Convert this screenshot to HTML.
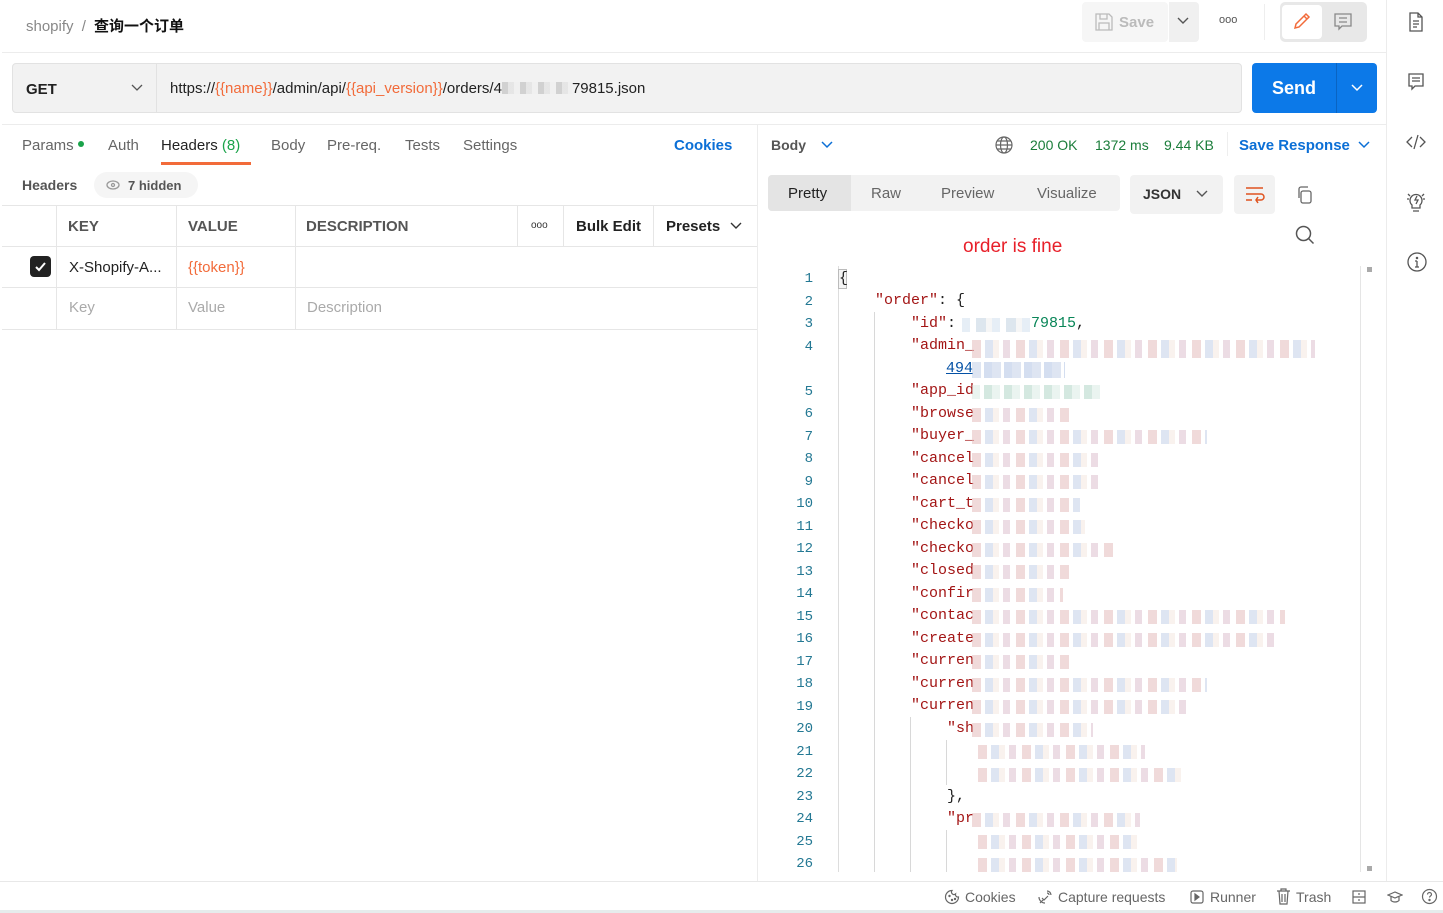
<!DOCTYPE html>
<html><head><meta charset="utf-8"><style>
*{box-sizing:border-box;margin:0;padding:0}
body{width:1443px;height:913px;overflow:hidden;background:#fff;font-family:"Liberation Sans","Noto Sans CJK SC",sans-serif;font-size:14px;color:#212121;position:relative}
.a{position:absolute;white-space:nowrap}
.t{margin-top:1px}
.hl{position:absolute;background:#e6e6e6}
.mono{font-family:"Liberation Mono",monospace;font-size:15px;margin-top:2px}
.k{color:#a31515}
.ln{position:absolute;width:40px;text-align:right;left:773px;color:#237893;font-family:"Liberation Mono",monospace;font-size:14px;margin-top:1px}
.bl{position:absolute;height:14px;opacity:.5;background:repeating-linear-gradient(90deg,#e2b5b5 0 9px,#fff 9px 13px,#bccbe6 13px 21px,#f3e6dc 21px 27px,#fff 27px 31px,#d8b8c8 31px 38px,#fff 38px 44px)}
.vg{position:absolute;width:1px;background:#d8d8d8}
.org{color:#f26b3a}
</style></head><body>
<div class="a" style="left:26px;top:15px;font-size:15px;color:#888">shopify <span style="margin:0 4px">/</span> <span style="color:#111;font-weight:bold">查询一个订单</span></div>
<div class="a" style="left:1082px;top:2px;width:86px;height:40px;background:#f6f6f6;border-radius:4px"></div>
<svg class="a" style="left:1094px;top:12px" width="20" height="20" viewBox="0 0 20 20" fill="none" stroke="#bbb" stroke-width="1.3"><path d="M2 2h13l3 3v13H2z M6 2v5h7V2 M5 18v-7h10v7"/></svg>
<div class="a" style="left:1119px;top:14px;font-size:15px;color:#bbb;font-weight:bold">Save</div>
<div class="a" style="left:1169px;top:2px;width:30px;height:40px;background:#f0f0f0;border-radius:0 4px 4px 0"></div>
<svg class="a" style="left:1176px;top:16px" width="14" height="10" viewBox="0 0 14 10" fill="none" stroke="#555" stroke-width="1.4"><path d="M2 2l5 5 5-5"/></svg>
<div class="a" style="left:1219px;top:14px;font-size:11px;color:#555;letter-spacing:0px">ooo</div>
<div class="a" style="left:1264px;top:4px;width:1px;height:36px;background:#eee"></div>
<div class="a" style="left:1280px;top:2px;width:87px;height:40px;background:#e8e8e8;border-radius:5px"></div>
<div class="a" style="left:1282px;top:5px;width:40px;height:34px;background:#fff;border-radius:4px"></div>
<svg class="a" style="left:1292px;top:11px" width="20" height="20" viewBox="0 0 20 20" fill="none" stroke="#f26b3a" stroke-width="1.5"><path d="M3 17l1-4L14 3l3 3L7 16z M12 5l3 3"/></svg>
<svg class="a" style="left:1333px;top:12px" width="20" height="20" viewBox="0 0 20 20" fill="none" stroke="#888" stroke-width="1.3"><path d="M2 2h16v12H9l-3 3v-3H2z M6 6h8 M6 10h8"/></svg>
<div class="hl" style="left:2px;top:52px;width:1384px;height:1px;background:#ececec"></div>
<div class="a" style="left:12px;top:63px;width:1230px;height:50px;background:#f2f2f2;border:1px solid #e2e2e2;border-radius:4px"></div>
<div class="a" style="left:156px;top:64px;width:1px;height:48px;background:#e2e2e2"></div>
<div class="a" style="left:26px;top:81px;font-size:15px;font-weight:bold">GET</div>
<svg class="a" style="left:130px;top:83px" width="14" height="10" viewBox="0 0 14 10" fill="none" stroke="#555" stroke-width="1.3"><path d="M2 2l5 5 5-5"/></svg>
<div class="a" style="left:170px;top:80px;font-size:15px;color:#222">https://<span class="org">{{name}}</span>/admin/api/<span class="org">{{api_version}}</span>/orders/4<span style="display:inline-block;width:70px;height:12px;background:repeating-linear-gradient(90deg,#bbb 0 6px,#ddd 6px 12px,#eee 12px 18px);opacity:.6;vertical-align:-1px"></span>79815.json</div>
<div class="a" style="left:1252px;top:63px;width:125px;height:50px;background:#0c79e8;border-radius:4px"></div>
<div class="a" style="left:1336px;top:63px;width:1px;height:50px;background:#0a64c2"></div>
<div class="a" style="left:1272px;top:78px;font-size:18px;color:#fff;font-weight:bold">Send</div>
<svg class="a" style="left:1350px;top:83px" width="14" height="10" viewBox="0 0 14 10" fill="none" stroke="#fff" stroke-width="1.5"><path d="M2 2l5 5 5-5"/></svg>
<div class="hl" style="left:2px;top:124px;width:1384px;height:1px;background:#ececec"></div>
<div class="a" style="left:22px;top:137px;font-size:15px;color:#666">Params <span style="display:inline-block;width:6px;height:6px;border-radius:3px;background:#1aa34a;vertical-align:3px"></span></div>
<div class="a" style="left:108px;top:137px;font-size:15px;color:#666">Auth</div>
<div class="a" style="left:161px;top:137px;font-size:15px;color:#222">Headers <span style="color:#1aa34a">(8)</span></div>
<div class="a" style="left:161px;top:162px;width:90px;height:3px;background:#f26b3a"></div>
<div class="a" style="left:271px;top:137px;font-size:15px;color:#666">Body</div>
<div class="a" style="left:327px;top:137px;font-size:15px;color:#666">Pre-req.</div>
<div class="a" style="left:405px;top:137px;font-size:15px;color:#666">Tests</div>
<div class="a" style="left:463px;top:137px;font-size:15px;color:#666">Settings</div>
<div class="a" style="left:674px;top:137px;font-size:15px;color:#0b6fd6;font-weight:bold">Cookies</div>
<div class="a" style="left:22px;top:177px;font-size:14px;color:#555;font-weight:bold">Headers</div>
<div class="a" style="left:94px;top:172px;width:104px;height:26px;background:#f5f5f5;border-radius:13px"></div>
<svg class="a" style="left:106px;top:179px" width="14" height="12" viewBox="0 0 14 12" fill="none" stroke="#999" stroke-width="1.3"><ellipse cx="7" cy="6" rx="6" ry="4"/><circle cx="7" cy="6" r="1.5"/></svg>
<div class="a" style="left:128px;top:178px;font-size:13px;color:#555;font-weight:bold">7 hidden</div>
<div class="hl" style="left:2px;top:205px;width:755px;height:1px"></div>
<div class="hl" style="left:2px;top:246px;width:755px;height:1px"></div>
<div class="hl" style="left:2px;top:287px;width:755px;height:1px"></div>
<div class="hl" style="left:2px;top:329px;width:755px;height:1px"></div>
<div class="hl" style="left:56px;top:205px;width:1px;height:124px"></div>
<div class="hl" style="left:176px;top:205px;width:1px;height:124px"></div>
<div class="hl" style="left:295px;top:205px;width:1px;height:124px"></div>
<div class="hl" style="left:517px;top:205px;width:1px;height:41px"></div>
<div class="hl" style="left:563px;top:205px;width:1px;height:41px"></div>
<div class="hl" style="left:653px;top:205px;width:1px;height:41px"></div>
<div class="a" style="left:68px;top:218px;font-size:15px;color:#555;font-weight:bold">KEY</div>
<div class="a" style="left:188px;top:218px;font-size:15px;color:#555;font-weight:bold">VALUE</div>
<div class="a" style="left:306px;top:218px;font-size:15px;color:#555;font-weight:bold">DESCRIPTION</div>
<div class="a" style="left:531px;top:220px;font-size:10px;color:#333">ooo</div>
<div class="a" style="left:576px;top:218px;font-size:15px;color:#222;font-weight:bold">Bulk Edit</div>
<div class="a" style="left:666px;top:218px;font-size:15px;color:#222;font-weight:bold">Presets</div>
<svg class="a" style="left:729px;top:221px" width="14" height="10" viewBox="0 0 14 10" fill="none" stroke="#333" stroke-width="1.4"><path d="M2 2l5 5 5-5"/></svg>
<div class="a" style="left:30px;top:256px;width:21px;height:21px;background:#222;border-radius:4px"></div>
<svg class="a" style="left:33px;top:259px" width="15" height="15" viewBox="0 0 15 15" fill="none" stroke="#fff" stroke-width="2"><path d="M3 8l3 3 6-7"/></svg>
<div class="a" style="left:69px;top:259px;font-size:15px;color:#222">X-Shopify-A...</div>
<div class="a" style="left:188px;top:259px;font-size:15px"><span class="org">{{token}}</span></div>
<div class="a" style="left:69px;top:299px;font-size:15px;color:#aaa">Key</div>
<div class="a" style="left:188px;top:299px;font-size:15px;color:#aaa">Value</div>
<div class="a" style="left:307px;top:299px;font-size:15px;color:#aaa">Description</div>
<div class="a" style="left:757px;top:125px;width:1px;height:756px;background:#ececec"></div>
<div class="a" style="left:771px;top:137px;font-size:14px;color:#555;font-weight:bold">Body</div>
<svg class="a" style="left:820px;top:140px" width="14" height="10" viewBox="0 0 14 10" fill="none" stroke="#0b6fd6" stroke-width="1.5"><path d="M2 2l5 5 5-5"/></svg>
<svg class="a" style="left:994px;top:135px" width="20" height="20" viewBox="0 0 20 20" fill="none" stroke="#666" stroke-width="1.2"><circle cx="10" cy="10" r="8"/><ellipse cx="10" cy="10" rx="3.5" ry="8"/><path d="M2 10h16 M3.5 6h13 M3.5 14h13"/></svg>
<div class="a" style="left:1030px;top:137px;font-size:14px;color:#1a7d3a">200 OK</div>
<div class="a" style="left:1095px;top:137px;font-size:14px;color:#1a7d3a">1372 ms</div>
<div class="a" style="left:1164px;top:137px;font-size:14px;color:#1a7d3a">9.44 KB</div>
<div class="a" style="left:1227px;top:132px;width:1px;height:24px;background:#eee"></div>
<div class="a" style="left:1239px;top:137px;font-size:15px;color:#0b6fd6;font-weight:bold">Save Response</div>
<svg class="a" style="left:1357px;top:140px" width="14" height="10" viewBox="0 0 14 10" fill="none" stroke="#0b6fd6" stroke-width="1.5"><path d="M2 2l5 5 5-5"/></svg>
<div class="a" style="left:768px;top:175px;width:352px;height:36px;background:#f2f2f2;border-radius:4px"></div>
<div class="a" style="left:768px;top:175px;width:83px;height:36px;background:#e4e4e4;border-radius:4px 0 0 4px"></div>
<div class="a" style="left:788px;top:185px;font-size:15px;color:#222">Pretty</div>
<div class="a" style="left:871px;top:185px;font-size:15px;color:#666">Raw</div>
<div class="a" style="left:941px;top:185px;font-size:15px;color:#666">Preview</div>
<div class="a" style="left:1037px;top:185px;font-size:15px;color:#666">Visualize</div>
<div class="a" style="left:1130px;top:175px;width:93px;height:39px;background:#f2f2f2;border-radius:4px"></div>
<div class="a" style="left:1143px;top:186px;font-size:14px;color:#333;font-weight:bold">JSON</div>
<svg class="a" style="left:1195px;top:189px" width="14" height="10" viewBox="0 0 14 10" fill="none" stroke="#555" stroke-width="1.4"><path d="M2 2l5 5 5-5"/></svg>
<div class="a" style="left:1234px;top:175px;width:41px;height:39px;background:#f2f2f2;border-radius:4px"></div>
<svg class="a" style="left:1244px;top:185px" width="22" height="20" viewBox="0 0 22 20" fill="none" stroke="#e0531f" stroke-width="1.5"><path d="M2 3h17 M2 9h15a3 3 0 010 6h-5 M14 12l-2 3 2 3 M2 15h6"/></svg>
<svg class="a" style="left:1295px;top:185px" width="20" height="20" viewBox="0 0 20 20" fill="none" stroke="#666" stroke-width="1.3"><rect x="6" y="6" width="10" height="12" rx="2"/><path d="M4 13V4a2 2 0 012-2h7"/></svg>
<svg class="a" style="left:1294px;top:224px" width="22" height="22" viewBox="0 0 22 22" fill="none" stroke="#555" stroke-width="1.5"><circle cx="9.5" cy="9.5" r="7"/><path d="M14.5 14.5l5 5"/></svg>
<div class="a" style="left:963px;top:236px;font-size:19px;color:#e8202a">order is fine</div>
<div class="a" style="left:838px;top:266px;width:1px;height:606px;background:#ddd"></div>
<div class="a" style="left:1360px;top:266px;width:1px;height:606px;background:#e5e5e5"></div>
<div class="a" style="left:1367px;top:267px;width:5px;height:5px;background:#aaa"></div>
<div class="a" style="left:1367px;top:866px;width:5px;height:5px;background:#aaa"></div>
<div class="vg" style="left:874px;top:312px;height:560px"></div>
<div class="vg" style="left:910px;top:717px;height:155px"></div>
<div class="vg" style="left:946px;top:740px;height:45px"></div>
<div class="vg" style="left:946px;top:830px;height:42px"></div>
<div class="a" style="left:838px;top:269px;width:9px;height:20px;border:1px solid #bbb;background:#f4f4f4"></div>
<div class="mono a" style="left:839px;top:268px">{</div>
<div class="mono a" style="left:875px;top:290px"><span class="k">"order"</span>: {</div>
<div class="mono a" style="left:911px;top:313px"><span class="k">"id"</span>: <span style="display:inline-block;width:66px"></span><span style="color:#098658">79815</span>,</div>
<div class="mono a" style="left:911px;top:335px"><span class="k">"admin_</span></div>
<div class="mono a" style="left:946px;top:358px;color:#0451a5;text-decoration:underline">494</div>
<div class="mono a" style="left:911px;top:380px"><span class="k">"app_id</span></div>
<div class="mono a" style="left:911px;top:403px"><span class="k">"browse</span></div>
<div class="mono a" style="left:911px;top:425px"><span class="k">"buyer_</span></div>
<div class="mono a" style="left:911px;top:448px"><span class="k">"cancel</span></div>
<div class="mono a" style="left:911px;top:470px"><span class="k">"cancel</span></div>
<div class="mono a" style="left:911px;top:493px"><span class="k">"cart_t</span></div>
<div class="mono a" style="left:911px;top:515px"><span class="k">"checko</span></div>
<div class="mono a" style="left:911px;top:538px"><span class="k">"checko</span></div>
<div class="mono a" style="left:911px;top:560px"><span class="k">"closed</span></div>
<div class="mono a" style="left:911px;top:583px"><span class="k">"confir</span></div>
<div class="mono a" style="left:911px;top:605px"><span class="k">"contac</span></div>
<div class="mono a" style="left:911px;top:628px"><span class="k">"create</span></div>
<div class="mono a" style="left:911px;top:650px"><span class="k">"curren</span></div>
<div class="mono a" style="left:911px;top:673px"><span class="k">"curren</span></div>
<div class="mono a" style="left:911px;top:695px"><span class="k">"curren</span></div>
<div class="mono a" style="left:947px;top:718px"><span class="k">"sh</span></div>
<div class="mono a" style="left:947px;top:786px">},</div>
<div class="mono a" style="left:947px;top:808px"><span class="k">"pr</span></div>
<div class="bl" style="left:962px;top:318px;width:72px;background:repeating-linear-gradient(90deg,#cde 0 8px,#fff 8px 14px,#bcd 14px 24px,#eee 24px 30px)"></div>
<div class="bl" style="left:972px;top:340px;width:343px;height:18px"></div>
<div class="bl" style="left:972px;top:362px;width:93px;height:16px;background:repeating-linear-gradient(90deg,#bccbe6 0 9px,#fff 9px 12px,#aabce0 12px 20px)"></div>
<div class="bl" style="left:972px;top:385px;width:128px;background:repeating-linear-gradient(90deg,#d6e8e0 0 8px,#fff 8px 12px,#a8d0c0 12px 20px)"></div>
<div class="bl" style="left:972px;top:408px;width:98px"></div>
<div class="bl" style="left:972px;top:430px;width:235px"></div>
<div class="bl" style="left:972px;top:453px;width:128px"></div>
<div class="bl" style="left:972px;top:475px;width:128px"></div>
<div class="bl" style="left:972px;top:498px;width:108px"></div>
<div class="bl" style="left:972px;top:520px;width:113px"></div>
<div class="bl" style="left:972px;top:543px;width:145px"></div>
<div class="bl" style="left:972px;top:565px;width:98px"></div>
<div class="bl" style="left:972px;top:588px;width:91px"></div>
<div class="bl" style="left:972px;top:610px;width:313px"></div>
<div class="bl" style="left:972px;top:633px;width:308px"></div>
<div class="bl" style="left:972px;top:655px;width:98px"></div>
<div class="bl" style="left:972px;top:678px;width:235px"></div>
<div class="bl" style="left:972px;top:700px;width:218px"></div>
<div class="bl" style="left:972px;top:723px;width:121px"></div>
<div class="bl" style="left:978px;top:745px;width:167px"></div>
<div class="bl" style="left:978px;top:768px;width:207px"></div>
<div class="bl" style="left:972px;top:813px;width:168px"></div>
<div class="bl" style="left:978px;top:835px;width:162px"></div>
<div class="bl" style="left:978px;top:858px;width:199px"></div>
<div class="ln" style="top:270px">1</div><div class="ln" style="top:293px">2</div><div class="ln" style="top:315px">3</div><div class="ln" style="top:338px">4</div>
<div class="ln" style="top:383px">5</div><div class="ln" style="top:405px">6</div><div class="ln" style="top:428px">7</div><div class="ln" style="top:450px">8</div>
<div class="ln" style="top:473px">9</div><div class="ln" style="top:495px">10</div><div class="ln" style="top:518px">11</div><div class="ln" style="top:540px">12</div>
<div class="ln" style="top:563px">13</div><div class="ln" style="top:585px">14</div><div class="ln" style="top:608px">15</div><div class="ln" style="top:630px">16</div>
<div class="ln" style="top:653px">17</div><div class="ln" style="top:675px">18</div><div class="ln" style="top:698px">19</div><div class="ln" style="top:720px">20</div>
<div class="ln" style="top:743px">21</div><div class="ln" style="top:765px">22</div><div class="ln" style="top:788px">23</div><div class="ln" style="top:810px">24</div>
<div class="ln" style="top:833px">25</div><div class="ln" style="top:855px">26</div>
<div class="a" style="left:1386px;top:0;width:1px;height:881px;background:#ececec"></div>
<svg class="a" style="left:1406px;top:11px" width="20" height="22" viewBox="0 0 20 22" fill="none" stroke="#555" stroke-width="1.3"><path d="M4 2h8l4 4v14H4z M12 2v4h4 M7 10h6 M7 13h6 M7 16h4"/></svg>
<svg class="a" style="left:1406px;top:71px" width="20" height="22" viewBox="0 0 20 22" fill="none" stroke="#555" stroke-width="1.3"><path d="M3 3h14v12H9l-3 3v-3H3z M6 7h8 M6 10h8"/></svg>
<svg class="a" style="left:1405px;top:132px" width="22" height="20" viewBox="0 0 22 20" fill="none" stroke="#555" stroke-width="1.3"><path d="M7 5l-5 5 5 5 M15 5l5 5-5 5 M13 3l-4 14"/></svg>
<svg class="a" style="left:1405px;top:190px" width="22" height="24" viewBox="0 0 22 24" fill="none" stroke="#555" stroke-width="1.3"><path d="M7 15a6 6 0 118 0v3H7z M8 21h6 M12 6l-2 4h3l-2 4 M2 9h2 M18 9h2 M3 4l2 2 M19 4l-2 2"/></svg>
<svg class="a" style="left:1406px;top:251px" width="22" height="22" viewBox="0 0 22 22" fill="none" stroke="#555" stroke-width="1.3"><circle cx="11" cy="11" r="9"/><path d="M11 10v6 M9 16h4 M9 10h2"/><circle cx="11" cy="7" r=".6" fill="#555"/></svg>
<div class="a" style="left:0;top:881px;width:1443px;height:1px;background:#e8e8e8"></div>
<div class="a" style="left:0;top:910px;width:1443px;height:3px;background:#e6ecec"></div>
<svg class="a" style="left:944px;top:889px" width="16" height="16" viewBox="0 0 16 16" fill="none" stroke="#666" stroke-width="1.2"><path d="M8 1.5a6.5 6.5 0 106.5 6.5 2.5 2.5 0 01-3-3 2.5 2.5 0 01-3.5-3.5z"/><circle cx="5.5" cy="7" r=".6"/><circle cx="8" cy="11" r=".6"/><circle cx="11" cy="10" r=".6"/></svg>
<div class="a" style="left:965px;top:889px;font-size:14px;color:#666">Cookies</div>
<svg class="a" style="left:1037px;top:889px" width="16" height="16" viewBox="0 0 16 16" fill="none" stroke="#666" stroke-width="1.2"><path d="M3 14l3-3 M2 8a6 6 0 006 6 M5 9l2 2 4-4 M10 2a4 4 0 014 4 M10 4a2 2 0 012 2"/></svg>
<div class="a" style="left:1058px;top:889px;font-size:14px;color:#666">Capture requests</div>
<svg class="a" style="left:1190px;top:890px" width="14" height="14" viewBox="0 0 14 14" fill="none" stroke="#666" stroke-width="1.2"><rect x="1" y="1" width="12" height="12" rx="2"/><path d="M5 4l4 3-4 3z" fill="#666"/></svg>
<div class="a" style="left:1210px;top:889px;font-size:14px;color:#666">Runner</div>
<svg class="a" style="left:1276px;top:888px" width="15" height="17" viewBox="0 0 15 17" fill="none" stroke="#666" stroke-width="1.2"><path d="M1 3h13 M5 3V1h5v2 M3 3l1 13h7l1-13 M6 6v8 M9 6v8"/></svg>
<div class="a" style="left:1296px;top:889px;font-size:14px;color:#666">Trash</div>
<svg class="a" style="left:1352px;top:890px" width="14" height="14" viewBox="0 0 14 14" fill="none" stroke="#666" stroke-width="1.2"><rect x="1" y="1" width="12" height="12"/><path d="M1 7h12 M7 3v2 M7 9v2"/></svg>
<svg class="a" style="left:1387px;top:890px" width="16" height="14" viewBox="0 0 16 14" fill="none" stroke="#666" stroke-width="1.2"><path d="M1 5l7-3 7 3-7 3z M4 6.5v4c2 2 6 2 8 0v-4"/></svg>
<svg class="a" style="left:1421px;top:888px" width="17" height="17" viewBox="0 0 17 17" fill="none" stroke="#666" stroke-width="1.2"><circle cx="8.5" cy="8.5" r="7"/><path d="M6.5 6.5a2 2 0 114 0c0 1.5-2 1.5-2 3"/><circle cx="8.5" cy="12" r=".6"/></svg>
</body></html>
